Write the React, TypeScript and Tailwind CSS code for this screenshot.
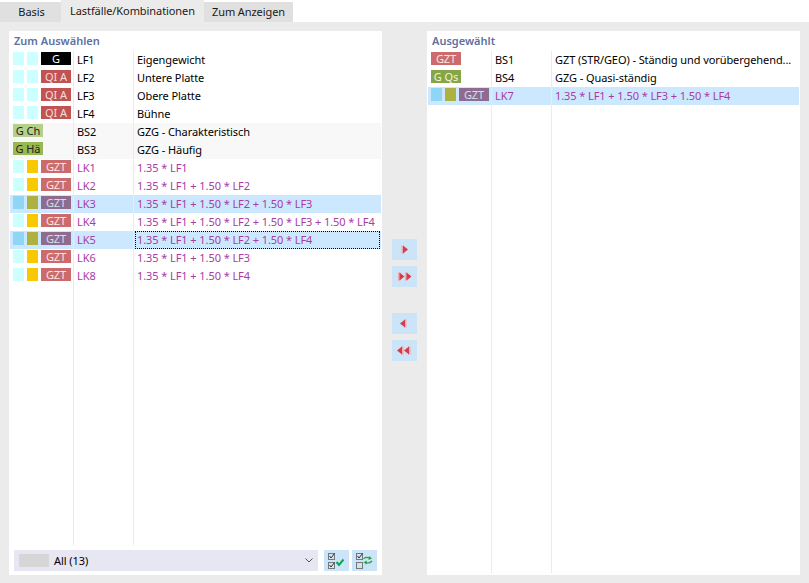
import { ReactNode } from "react";

type Row = {
  squares?: boolean;
  badge: string;
  id: string;
  text: string;
  purple?: boolean;
  selected?: boolean;
  soft?: boolean;
  focus?: boolean;
};

const leftRows: Row[] = [
  { squares: true, badge: "G", id: "LF1", text: "Eigengewicht" },
  { squares: true, badge: "QI A", id: "LF2", text: "Untere Platte" },
  { squares: true, badge: "QI A", id: "LF3", text: "Obere Platte" },
  { squares: true, badge: "QI A", id: "LF4", text: "Bühne" },
  { badge: "G Ch", id: "BS2", text: "GZG - Charakteristisch", soft: true },
  { badge: "G Hä", id: "BS3", text: "GZG - Häufig", soft: true },
  { squares: true, badge: "GZT", id: "LK1", text: "1.35 * LF1", purple: true },
  { squares: true, badge: "GZT", id: "LK2", text: "1.35 * LF1 + 1.50 * LF2", purple: true },
  { squares: true, badge: "GZT", id: "LK3", text: "1.35 * LF1 + 1.50 * LF2 + 1.50 * LF3", purple: true, selected: true },
  { squares: true, badge: "GZT", id: "LK4", text: "1.35 * LF1 + 1.50 * LF2 + 1.50 * LF3 + 1.50 * LF4", purple: true },
  { squares: true, badge: "GZT", id: "LK5", text: "1.35 * LF1 + 1.50 * LF2 + 1.50 * LF4", purple: true, selected: true, focus: true },
  { squares: true, badge: "GZT", id: "LK6", text: "1.35 * LF1 + 1.50 * LF3", purple: true },
  { squares: true, badge: "GZT", id: "LK8", text: "1.35 * LF1 + 1.50 * LF4", purple: true },
];

const rightRows: Row[] = [
  { badge: "GZT", id: "BS1", text: "GZT (STR/GEO) - Ständig und vorübergehend..." },
  { badge: "G Qs", id: "BS4", text: "GZG - Quasi-ständig" },
  { squares: true, badge: "GZT", id: "LK7", text: "1.35 * LF1 + 1.50 * LF3 + 1.50 * LF4", purple: true, selected: true },
];

function badgeClass(row: Row) {
  if (row.badge === "G") return "bg-black text-white";
  if (row.badge === "QI A") return "bg-[#c25353] text-[#f6dede]";
  if (row.badge === "G Ch") return "bg-[#b5d08a] text-[#222222]";
  if (row.badge === "G Hä") return "bg-[#98b851] text-[#222222]";
  if (row.badge === "G Qs") return "bg-[#86a645] text-[#f0f4e0]";
  if (row.selected) return "bg-[#8e6c90] text-[#cfe0ef]";
  return "bg-[#cc6b6b] text-[#fbe6e6]";
}

function ListRow({ row }: { row: Row }) {
  const bg = row.selected ? "bg-[#cce8ff]" : row.soft ? "bg-[#f8f8f8]" : "";
  const textColor = row.purple ? "text-[#a93ba3]" : "text-black";
  return (
    <div className={`flex h-[18px] shrink-0 ${bg}`}>
      <div className="flex w-16 shrink-0 items-start gap-[3px] border-r border-[#ebebeb] pl-[3px] pt-px">
        {row.squares && (
          <>
            <span className={`h-[13px] w-[11px] ${row.selected ? "bg-[#8ed5f6]" : "bg-[#ccffff]"}`} />
            <span
              className={`h-[13px] w-[11px] ${
                row.selected
                  ? "bg-[#aeb040]"
                  : row.purple
                    ? "bg-[#f8c800]"
                    : "bg-[#ccffff]"
              }`}
            />
          </>
        )}
        <span className={`h-[13px] w-[30px] text-center leading-[13px] ${badgeClass(row)}`}>{row.badge}</span>
      </div>
      <div className={`w-[60px] shrink-0 border-r border-[#ebebeb] pl-[3px] leading-[18px] ${textColor}`}>
        {row.id}
      </div>
      <div
        className={`ml-px mr-px min-w-0 flex-1 truncate ${textColor} ${
          row.focus
            ? "border border-dotted border-black pl-px leading-[16px]"
            : "pl-[2px] leading-[18px]"
        }`}
      >
        {row.text}
      </div>
    </div>
  );
}

function Panel({ title, rows, footer }: { title: string; rows: Row[]; footer?: ReactNode }) {
  return (
    <section className="flex w-[373px] shrink-0 flex-col bg-white px-px">
      <h2 className="h-5 pl-1 text-[11px] font-semibold leading-[19px] tracking-normal text-[#60709f]">{title}</h2>
      <div className="flex min-h-0 flex-1 flex-col">
        {rows.map((row) => (
          <ListRow key={row.id} row={row} />
        ))}
        <div className="flex flex-1">
          <div className="w-16 shrink-0 border-r border-[#ebebeb]" />
          <div className="w-[60px] shrink-0 border-r border-[#ebebeb]" />
        </div>
      </div>
      {footer ?? <div className="h-[2px] shrink-0" />}
    </section>
  );
}

function MoveButton({ left, starts }: { left?: boolean; starts: number[] }) {
  return (
    <button className="h-[21px] w-[25px] bg-[#cce4f7]">
      <svg width="25" height="21" viewBox="0 0 25 21" className="block">
        {starts.map((x) =>
          left ? (
            <g key={x}>
              <rect x={x + 4} y="6.5" width="2.5" height="8" fill="#f4a6ac" />
              <path d={`M${x} 10.5 L${x + 5} 6.5 V14.5 Z`} fill="#d63c4a" />
            </g>
          ) : (
            <g key={x}>
              <rect x={x} y="6.5" width="2.5" height="8" fill="#f4a6ac" />
              <path d={`M${x + 1.5} 6.5 L${x + 6.5} 10.5 L${x + 1.5} 14.5 Z`} fill="#d63c4a" />
            </g>
          ),
        )}
      </svg>
    </button>
  );
}

function Check({ y }: { y: number }) {
  return (
    <g>
      <rect x="4.5" y={y + 0.5} width="6" height="6" fill="none" stroke="#777777" />
      <path d={`M5.5 ${y + 3} l1.5 2 l3.5 -4.5`} fill="none" stroke="#333333" />
    </g>
  );
}

function Footer() {
  return (
    <div className="mb-1 mt-[5px] flex h-[21px] shrink-0 gap-[6px] pl-1">
      <div className="flex w-[304px] items-center bg-[#e6e7f2] pl-[5px] pr-[5px]">
        <span className="h-[13px] w-[30px] bg-[#d6d6d6]" />
        <span className="ml-[5px] flex-1 pt-px text-black">All (13)</span>
        <svg width="8" height="5" viewBox="0 0 8 5">
          <path d="M0.5 0.5 L4 4 L7.5 0.5" fill="none" stroke="#555555" />
        </svg>
      </div>
      <button className="h-[21px] w-[25px] bg-[#cce4f7]">
        <svg width="25" height="21" viewBox="0 0 25 21" className="block">
          <Check y={3} />
          <Check y={12} />
          <path d="M12.5 12 L15 15 L19.5 9.5" fill="none" stroke="#08a84e" strokeWidth="2" />
        </svg>
      </button>
      <button className="-ml-[3px] h-[21px] w-[25px] bg-[#cce4f7]">
        <svg width="25" height="21" viewBox="0 0 25 21" className="block">
          <Check y={3} />
          <rect x="4.5" y="12.5" width="6" height="6" fill="none" stroke="#777777" />
          <path d="M11.5 9 C13 7 15 7 17.5 8" fill="none" stroke="#22a04a" strokeWidth="1.2" />
          <path d="M17 6 L20 8.5 L16.5 10 Z" fill="#22a04a" />
          <path d="M20 11 C18 13 16 13.5 14 12.5" fill="none" stroke="#22a04a" strokeWidth="1.2" />
          <path d="M14.5 10.5 L11.5 12.5 L15 14.5 Z" fill="#22a04a" />
        </svg>
      </button>
    </div>
  );
}

export default function App() {
  return (
    <div className="flex h-[583px] w-[809px] flex-col overflow-hidden bg-white font-['Noto_Sans',sans-serif] text-[11px] tracking-[-0.08px]">
      <div className="flex h-[22px] shrink-0 items-end">
        <div className="flex h-5 w-[61px] items-center justify-center bg-[#e0e0e0] pl-[2px] text-[#1a1a1a]">Basis</div>
        <div className="flex h-[22px] w-[143px] items-center justify-center bg-[#ebebeb] text-[#1a1a1a]">Lastfälle/Kombinationen</div>
        <div className="flex h-5 w-[89px] items-center justify-center bg-[#e0e0e0] text-[#1a1a1a]">Zum Anzeigen</div>
      </div>
      <div className="flex min-h-0 flex-1 bg-[#ebebeb] pb-2 pl-[9px] pt-[9px]">
        <Panel title="Zum Auswählen" rows={leftRows} footer={<Footer />} />
        <div className="flex w-[45px] shrink-0 flex-col items-center pt-[208px]">
          <div className="flex flex-col gap-[6px]">
            <MoveButton starts={[9.5]} />
            <MoveButton starts={[6, 13]} />
          </div>
          <div className="mt-[26px] flex flex-col gap-[6px]">
            <MoveButton left starts={[8]} />
            <MoveButton left starts={[5, 12]} />
          </div>
        </div>
        <Panel title="Ausgewählt" rows={rightRows} />
      </div>
    </div>
  );
}
